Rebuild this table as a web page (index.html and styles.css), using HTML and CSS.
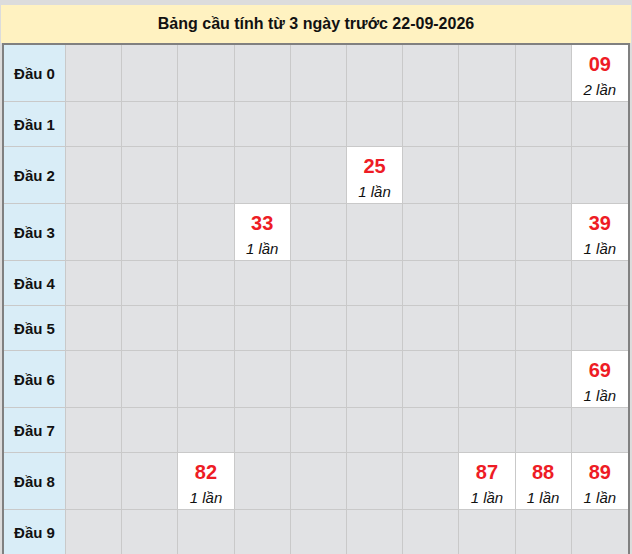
FILE: index.html
```html
<!DOCTYPE html>
<html lang="vi">
<head>
<meta charset="utf-8">
<title>Bảng cầu</title>
<link rel="stylesheet" href="styles.css">
</head>
<body>
<div class="board">
  <div class="title">Bảng cầu tính từ 3 ngày trước 22-09-2026</div>
  <div class="frame">
    <table class="grid">
      <colgroup>
        <col class="c-label">
        <col><col><col><col><col><col><col><col><col><col>
      </colgroup>
      <tbody>
        <tr class="tall"><th>Đầu 0</th><td></td><td></td><td></td><td></td><td></td><td></td><td></td><td></td><td></td><td class="hit"><span class="num">09</span><span class="cnt">2 lần</span></td></tr>
        <tr class="short"><th>Đầu 1</th><td></td><td></td><td></td><td></td><td></td><td></td><td></td><td></td><td></td><td></td></tr>
        <tr class="tall"><th>Đầu 2</th><td></td><td></td><td></td><td></td><td></td><td class="hit"><span class="num">25</span><span class="cnt">1 lần</span></td><td></td><td></td><td></td><td></td></tr>
        <tr class="tall"><th>Đầu 3</th><td></td><td></td><td></td><td class="hit"><span class="num">33</span><span class="cnt">1 lần</span></td><td></td><td></td><td></td><td></td><td></td><td class="hit"><span class="num">39</span><span class="cnt">1 lần</span></td></tr>
        <tr class="short"><th>Đầu 4</th><td></td><td></td><td></td><td></td><td></td><td></td><td></td><td></td><td></td><td></td></tr>
        <tr class="short"><th>Đầu 5</th><td></td><td></td><td></td><td></td><td></td><td></td><td></td><td></td><td></td><td></td></tr>
        <tr class="tall"><th>Đầu 6</th><td></td><td></td><td></td><td></td><td></td><td></td><td></td><td></td><td></td><td class="hit"><span class="num">69</span><span class="cnt">1 lần</span></td></tr>
        <tr class="short"><th>Đầu 7</th><td></td><td></td><td></td><td></td><td></td><td></td><td></td><td></td><td></td><td></td></tr>
        <tr class="tall"><th>Đầu 8</th><td></td><td></td><td class="hit"><span class="num">82</span><span class="cnt">1 lần</span></td><td></td><td></td><td></td><td></td><td class="hit"><span class="num">87</span><span class="cnt">1 lần</span></td><td class="hit"><span class="num">88</span><span class="cnt">1 lần</span></td><td class="hit"><span class="num">89</span><span class="cnt">1 lần</span></td></tr>
        <tr class="short"><th>Đầu 9</th><td></td><td></td><td></td><td></td><td></td><td></td><td></td><td></td><td></td><td></td></tr>
      </tbody>
    </table>
  </div>
</div>
</body>
</html>
```
FILE: styles.css
```css
html, body {
  margin: 0;
  padding: 0;
  background: #dcdcdc;
}
body {
  padding: 5px 1px 0 1px;
  font-family: "Liberation Sans", Arial, sans-serif;
  overflow: hidden;
  height: 554px;
  box-sizing: border-box;
}
.board {
  width: 630px;
}
.title {
  height: 38px;
  line-height: 38px;
  background: #fff2c1;
  text-align: center;
  font-weight: bold;
  font-size: 16px;
  color: #111;
}
.frame {
  margin: 0 1px;
  border: 2px solid #808080;
  border-bottom: 0;
  background: #e1e2e4;
}
.grid {
  width: 624px;
  table-layout: fixed;
  border-collapse: separate;
  border-spacing: 0;
}
.c-label {
  width: 62px;
}
.grid th,
.grid td {
  padding: 0;
  border-right: 1px solid #c9c9c9;
  border-bottom: 1px solid #c9c9c9;
  text-align: center;
  vertical-align: top;
}
.grid th {
  background: #d9edf7;
  font-weight: bold;
  font-size: 15px;
  color: #111;
  vertical-align: middle;
}
.grid td:last-child {
  border-right: 0;
}
.tall th, .tall td {
  height: 56px;
}
.short th, .short td {
  height: 44px;
}
.grid td.hit {
  background: #ffffff;
  padding-top: 7px;
  box-sizing: border-box;
}
.num {
  display: block;
  font-size: 20px;
  line-height: 24px;
  font-weight: bold;
  color: #ee1c25;
}
.cnt {
  display: block;
  margin-top: 4px;
  font-size: 15px;
  line-height: 20px;
  font-style: italic;
  color: #111;
}
```
